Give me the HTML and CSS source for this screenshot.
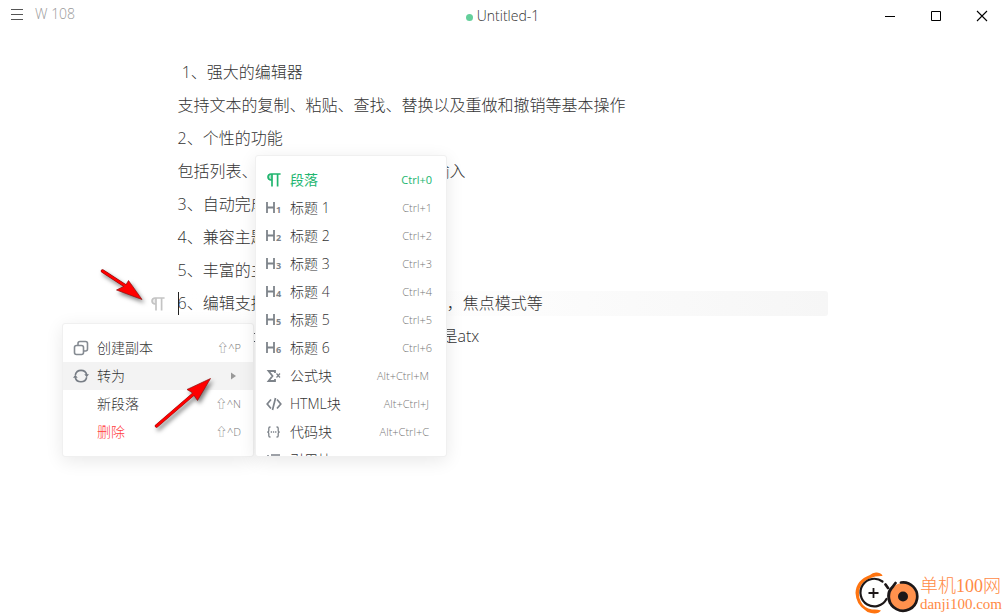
FILE: index.html
```
<!DOCTYPE html>
<html lang="zh-CN">
<head>
<meta charset="utf-8">
<title>Untitled-1</title>
<link rel="stylesheet" href="styles.css">
</head>
<body>
<svg class="defs" width="0" height="0" aria-hidden="true">
  <symbol id="pilcrow" viewBox="0 0 14 14"><path d="M5 1H13.6M5 1H4a3 3 0 0 0 0 6H5M5 1V13.5M10.6 1V13.5" fill="none" stroke="currentColor" stroke-width="1.7"/><path d="M4 1h1v6H4a3 3 0 0 1 0-6z" fill="currentColor" fill-opacity=".35"/></symbol>
  <symbol id="head" viewBox="0 0 15 14"><path d="M1 1V12M8 1V12M1 6.500H8" fill="none" stroke="currentColor" stroke-width="1.8"/></symbol>
</svg>

<header class="titlebar">
  <div class="bar-left">
    <button class="menu-button" aria-label="菜单"><svg width="12" height="12" viewBox="0 0 12 12"><path d="M0 1.5H12M0 6.5H12M0 11.5H12" stroke="#555" stroke-width="1"/></svg></button>
    <span class="word-count">W 108</span>
  </div>
  <h1 class="doc-title"><span class="dot"></span>Untitled-1</h1>
  <div class="window-controls">
    <button aria-label="最小化"><svg width="12" height="12" viewBox="0 0 12 12"><path d="M1 6.5H11" stroke="#000"/></svg></button>
    <button aria-label="最大化"><svg width="12" height="12" viewBox="0 0 12 12"><path d="M1.500 1.500H10.500V10.500H1.500Z" fill="none" stroke="#000"/></svg></button>
    <button aria-label="关闭"><svg width="12" height="12" viewBox="0 0 12 12"><path d="M1 1L11 11M11 1L1 11" stroke="#000" stroke-width="1.1"/></svg></button>
  </div>
</header>

<main class="editor">
  <p>&nbsp;1、强大的编辑器</p>
  <p>支持文本的复制、粘贴、查找、替换以及重做和撤销等基本操作</p>
  <p>2、个性的功能</p>
  <p>包括列表、表格、代码块、数学公式输入</p>
  <p>3、自动完成</p>
  <p>4、兼容主题</p>
  <p>5、丰富的主题</p>
  <p class="active"><svg class="front-icon" width="14" height="14"><use href="#pilcrow"/></svg><span class="caret"></span>6、编辑支持 源代码模式，打字机模式，焦点模式等</p>
  <p>7、可设置title 标题样式，默认的格式是atx</p>
</main>

<div class="menu front-menu" role="menu">
  <button class="item" role="menuitem"><svg class="icon" width="16" height="16" viewBox="0 0 16 16"><g fill="none" stroke="#858b92" stroke-width="1.6"><rect x="1.500" y="5.500" width="9" height="9" rx="2"/><path d="M5 5.500V3.500a2 2 0 0 1 2-2h5.500a2 2 0 0 1 2 2V9a2 2 0 0 1-2 2H10.500"/></g></svg><span class="label">创建副本</span><span class="shortcut">⇧^P</span></button>
  <button class="item hover" role="menuitem"><svg class="icon" width="16" height="16" viewBox="0 0 16 16"><path d="M2.300 7A5.900 5.900 0 0 1 13.800 7M13.700 9.200A5.900 5.900 0 0 1 2.200 9.200" fill="none" stroke="#777d85" stroke-width="1.600"/><path d="M11.300 6.300H16L13.700 9.200ZM0 9.700L2.300 6.800L4.700 9.700Z" fill="#777d85"/></svg><span class="label">转为</span><svg class="submenu-arrow" width="5" height="8" viewBox="0 0 5 8"><path d="M0 0.500L5 4L0 7.500Z" fill="#999"/></svg></button>
  <button class="item" role="menuitem"><span class="icon"></span><span class="label">新段落</span><span class="shortcut">⇧^N</span></button>
  <button class="item danger" role="menuitem"><span class="icon"></span><span class="label">删除</span><span class="shortcut">⇧^D</span></button>
</div>

<div class="menu turn-menu" role="menu">
  <button class="item current" role="menuitem"><svg class="icon" width="16" height="14" viewBox="-1 0 16 14"><use href="#pilcrow" width="14" height="14"/></svg><span class="label">段落</span><span class="shortcut">Ctrl+0</span></button>
  <button class="item" role="menuitem"><span class="icon heading"><svg width="10" height="14" viewBox="0 0 10 14"><use href="#head" width="15" height="14"/></svg><sub>1</sub></span><span class="label">标题 1</span><span class="shortcut">Ctrl+1</span></button>
  <button class="item" role="menuitem"><span class="icon heading"><svg width="10" height="14" viewBox="0 0 10 14"><use href="#head" width="15" height="14"/></svg><sub>2</sub></span><span class="label">标题 2</span><span class="shortcut">Ctrl+2</span></button>
  <button class="item" role="menuitem"><span class="icon heading"><svg width="10" height="14" viewBox="0 0 10 14"><use href="#head" width="15" height="14"/></svg><sub>3</sub></span><span class="label">标题 3</span><span class="shortcut">Ctrl+3</span></button>
  <button class="item" role="menuitem"><span class="icon heading"><svg width="10" height="14" viewBox="0 0 10 14"><use href="#head" width="15" height="14"/></svg><sub>4</sub></span><span class="label">标题 4</span><span class="shortcut">Ctrl+4</span></button>
  <button class="item" role="menuitem"><span class="icon heading"><svg width="10" height="14" viewBox="0 0 10 14"><use href="#head" width="15" height="14"/></svg><sub>5</sub></span><span class="label">标题 5</span><span class="shortcut">Ctrl+5</span></button>
  <button class="item" role="menuitem"><span class="icon heading"><svg width="10" height="14" viewBox="0 0 10 14"><use href="#head" width="15" height="14"/></svg><sub>6</sub></span><span class="label">标题 6</span><span class="shortcut">Ctrl+6</span></button>
  <button class="item" role="menuitem"><svg class="icon" width="16" height="14" viewBox="0 0 16 14"><path d="M9 4V2H2.500L6.500 7L2.500 12H9V10" fill="none" stroke="currentColor" stroke-width="1.8"/><path d="M10.500 4.500L14 8.500M14 4.500L10.500 8.500" stroke="currentColor" stroke-width="1.200"/></svg><span class="label">公式块</span><span class="shortcut long">Alt+Ctrl+M</span></button>
  <button class="item" role="menuitem"><svg class="icon" width="16" height="14" viewBox="0 0 16 14"><path d="M5 2.500L1.200 7L5 11.500M11 2.500L14.800 7L11 11.500M9.500 1L6.500 13" fill="none" stroke="currentColor" stroke-width="1.700"/></svg><span class="label">HTML块</span><span class="shortcut long">Alt+Ctrl+J</span></button>
  <button class="item" role="menuitem"><svg class="icon" width="16" height="14" viewBox="0 0 16 14"><path d="M4.500 2H4Q2.800 2 2.800 3.300V5.500Q2.800 7 1.300 7Q2.800 7 2.800 8.500V10.700Q2.800 12 4 12H4.500M10.500 2H11Q12.200 2 12.200 3.300V5.500Q12.200 7 13.700 7Q12.200 7 12.200 8.500V10.700Q12.200 12 11 12H10.500" fill="none" stroke="currentColor" stroke-width="1.300"/><path d="M4.700 7H6M6.900 7H8.200M9.100 7H10.400" stroke="currentColor" stroke-width="1.500"/></svg><span class="label">代码块</span><span class="shortcut long">Alt+Ctrl+C</span></button>
  <button class="item" role="menuitem"><svg class="icon" width="16" height="14" viewBox="0 0 16 14"><path d="M2 2V12M5 2H14M5 7H14M5 11.500H14" fill="none" stroke="currentColor" stroke-width="1.500"/></svg><span class="label">引用块</span><span class="shortcut long">Alt+Ctrl+Q</span></button>
</div>

<svg class="pointer pointer-top" width="56" height="44" viewBox="0 0 56 44" aria-hidden="true"><path d="M7.500 6L32 22" stroke="#8c1010" stroke-width="3.400" stroke-linecap="round"/><path d="M47 34.500L33.500 15.500L30.500 20.500L21.500 25Z" fill="#f00" stroke="#8c1010" stroke-width=".7"/><path d="M7.500 6L32 22" stroke="#f00" stroke-width="2.500" stroke-linecap="round"/></svg>
<svg class="pointer pointer-bottom" width="66" height="60" viewBox="0 0 66 60" aria-hidden="true"><path d="M6.500 52L43 20.500" stroke="#8c1010" stroke-width="3.400" stroke-linecap="round"/><path d="M60.500 4.500L37 15.500L42 18.500L47.500 26.500Z" fill="#f00" stroke="#8c1010" stroke-width=".7"/><path d="M6.500 52L43 20.500" stroke="#f00" stroke-width="2.500" stroke-linecap="round"/></svg>

<div class="watermark">
  <svg width="64" height="44" viewBox="0 0 64 44" aria-hidden="true">
    <path d="M15 4Q18 1 22 1.500Q27 2 27.500 5Q14 4.500 6.500 13.500Q1.500 22 6 31Q9 37 17 38.500Q22 38 26 39.500Q23 43.500 16 42Q12 41.500 10 39Q1 33 .5 22Q1 9 15 4Z" fill="#ff7410"/>
    <path d="M27.500 10.500A13.800 13.800 0 1 0 31.500 28" fill="none" stroke="#1c1718" stroke-width="2.200" stroke-linecap="round"/>
    <circle cx="48" cy="25.500" r="13.500" fill="#ff914d"/>
    <path d="M46 11.500A14.200 14.200 0 1 1 38 15.500M30.500 13.500L33 17M40.500 12L37.500 16Q31 22 35 32" fill="none" stroke="#1c1718" stroke-width="2.700" stroke-linecap="round"/>
    <path d="M18.500 17V27M13.500 22H23.500" stroke="#1c1718" stroke-width="1.800"/>
    <circle cx="48" cy="25.500" r="5" fill="#1c1718"/>
  </svg>
  <div class="brand"><span class="brand-name">单机100网</span><span class="brand-url">danji100.com</span></div>
</div>
</body>
</html>
```
FILE: styles.css
```
* { box-sizing: border-box; }
body {
  margin: 0;
  min-height: 100vh;
  position: relative;
  overflow: hidden;
  background: #fff;
  color: #333;
  font-family: "Open Sans", "Noto Sans CJK SC", sans-serif;
  font-size: 16px;
  font-weight: 300;
}
button {
  border: 0;
  padding: 0;
  background: none;
  color: inherit;
  font: inherit;
}
.defs { position: absolute; }
.titlebar {
  display: grid;
  grid-template-columns: 1fr auto 1fr;
  height: 32px;
  font-size: 14px;
}
.bar-left {
  display: flex;
  align-items: flex-start;
  gap: 12px;
  padding: 4px 0 0 11px;
}
.menu-button { display: flex; padding-top: 4px; }
.word-count { color: #999; line-height: 20px; }
.doc-title {
  display: flex;
  align-items: center;
  gap: 4px;
  margin: 0;
  padding-bottom: 2px;
  font-size: 14px;
  font-weight: 300;
}
.dot { width: 7px; height: 7px; margin-top: 4px; border-radius: 50%; background: #64cf9b; }
.window-controls { display: flex; justify-content: flex-end; }
.window-controls button { display: flex; align-items: center; justify-content: center; width: 46px; }
.editor {
  display: flex;
  flex-direction: column;
  gap: 8px;
  max-width: 650px;
  margin: 28px auto 0;
}
.editor p { margin: 0; line-height: 25px; white-space: nowrap; }
.active {
  position: relative;
  border-radius: 3px;
  background: linear-gradient(90deg, #fff 0%, #fefefe 40%, #f6f6f6 100%);
}
.front-icon { position: absolute; left: -27px; top: 6px; color: #c4c4c4; }
.caret { position: absolute; left: 0; top: 1px; width: 1px; height: 23px; background: #222; }
.menu {
  position: absolute;
  width: 192px;
  padding: 10px 0;
  overflow: hidden;
  border: 1px solid #f0f0f0;
  border-radius: 3px;
  background: #fff;
  box-shadow: 0 4px 18px rgba(0, 0, 0, .09);
  font-size: 14px;
}
.front-menu { left: 62px; top: 323px; }
.turn-menu { left: 255px; top: 155px; height: 302px; }
.item {
  display: flex;
  align-items: center;
  width: 100%;
  height: 28px;
  padding: 0 14px 0 10px;
  text-align: left;
}
.front-menu .item { padding-right: 12px; }
.hover { background: #f3f3f3; }
.icon { flex: none; width: 16px; margin-right: 8px; color: #7d838a; }
.label { flex: 1; padding-bottom: 2px; }
.shortcut { padding-bottom: 2px; color: #777; font-size: 11px; }
.long { padding-right: 3px; }
.submenu-arrow { margin-right: 5px; }
.danger .label { color: #ff4040; }
.current, .current .icon, .current .shortcut { color: #21b56f; }
.current .shortcut, .current .label { font-weight: 400; }
.heading { display: flex; align-items: center; }
.heading sub { padding-top: 4px; font-size: 9px; font-weight: 700; line-height: 10px; }
.pointer { position: absolute; filter: drop-shadow(2px 3px 2px rgba(0, 0, 0, .5)); }
.pointer-top { left: 95px; top: 265px; }
.pointer-bottom { left: 150px; top: 374px; }
.watermark {
  position: absolute;
  right: 3px;
  bottom: 0;
  display: flex;
  align-items: flex-end;
  gap: 1px;
  color: #ff8a45;
  font-family: "Liberation Serif", "Noto Sans CJK SC", serif;
}
.brand { display: flex; flex-direction: column; padding-bottom: 2px; }
.brand-name { font-size: 18px; line-height: 18px; }
.brand-url { font-size: 15px; line-height: 18px; }
```
